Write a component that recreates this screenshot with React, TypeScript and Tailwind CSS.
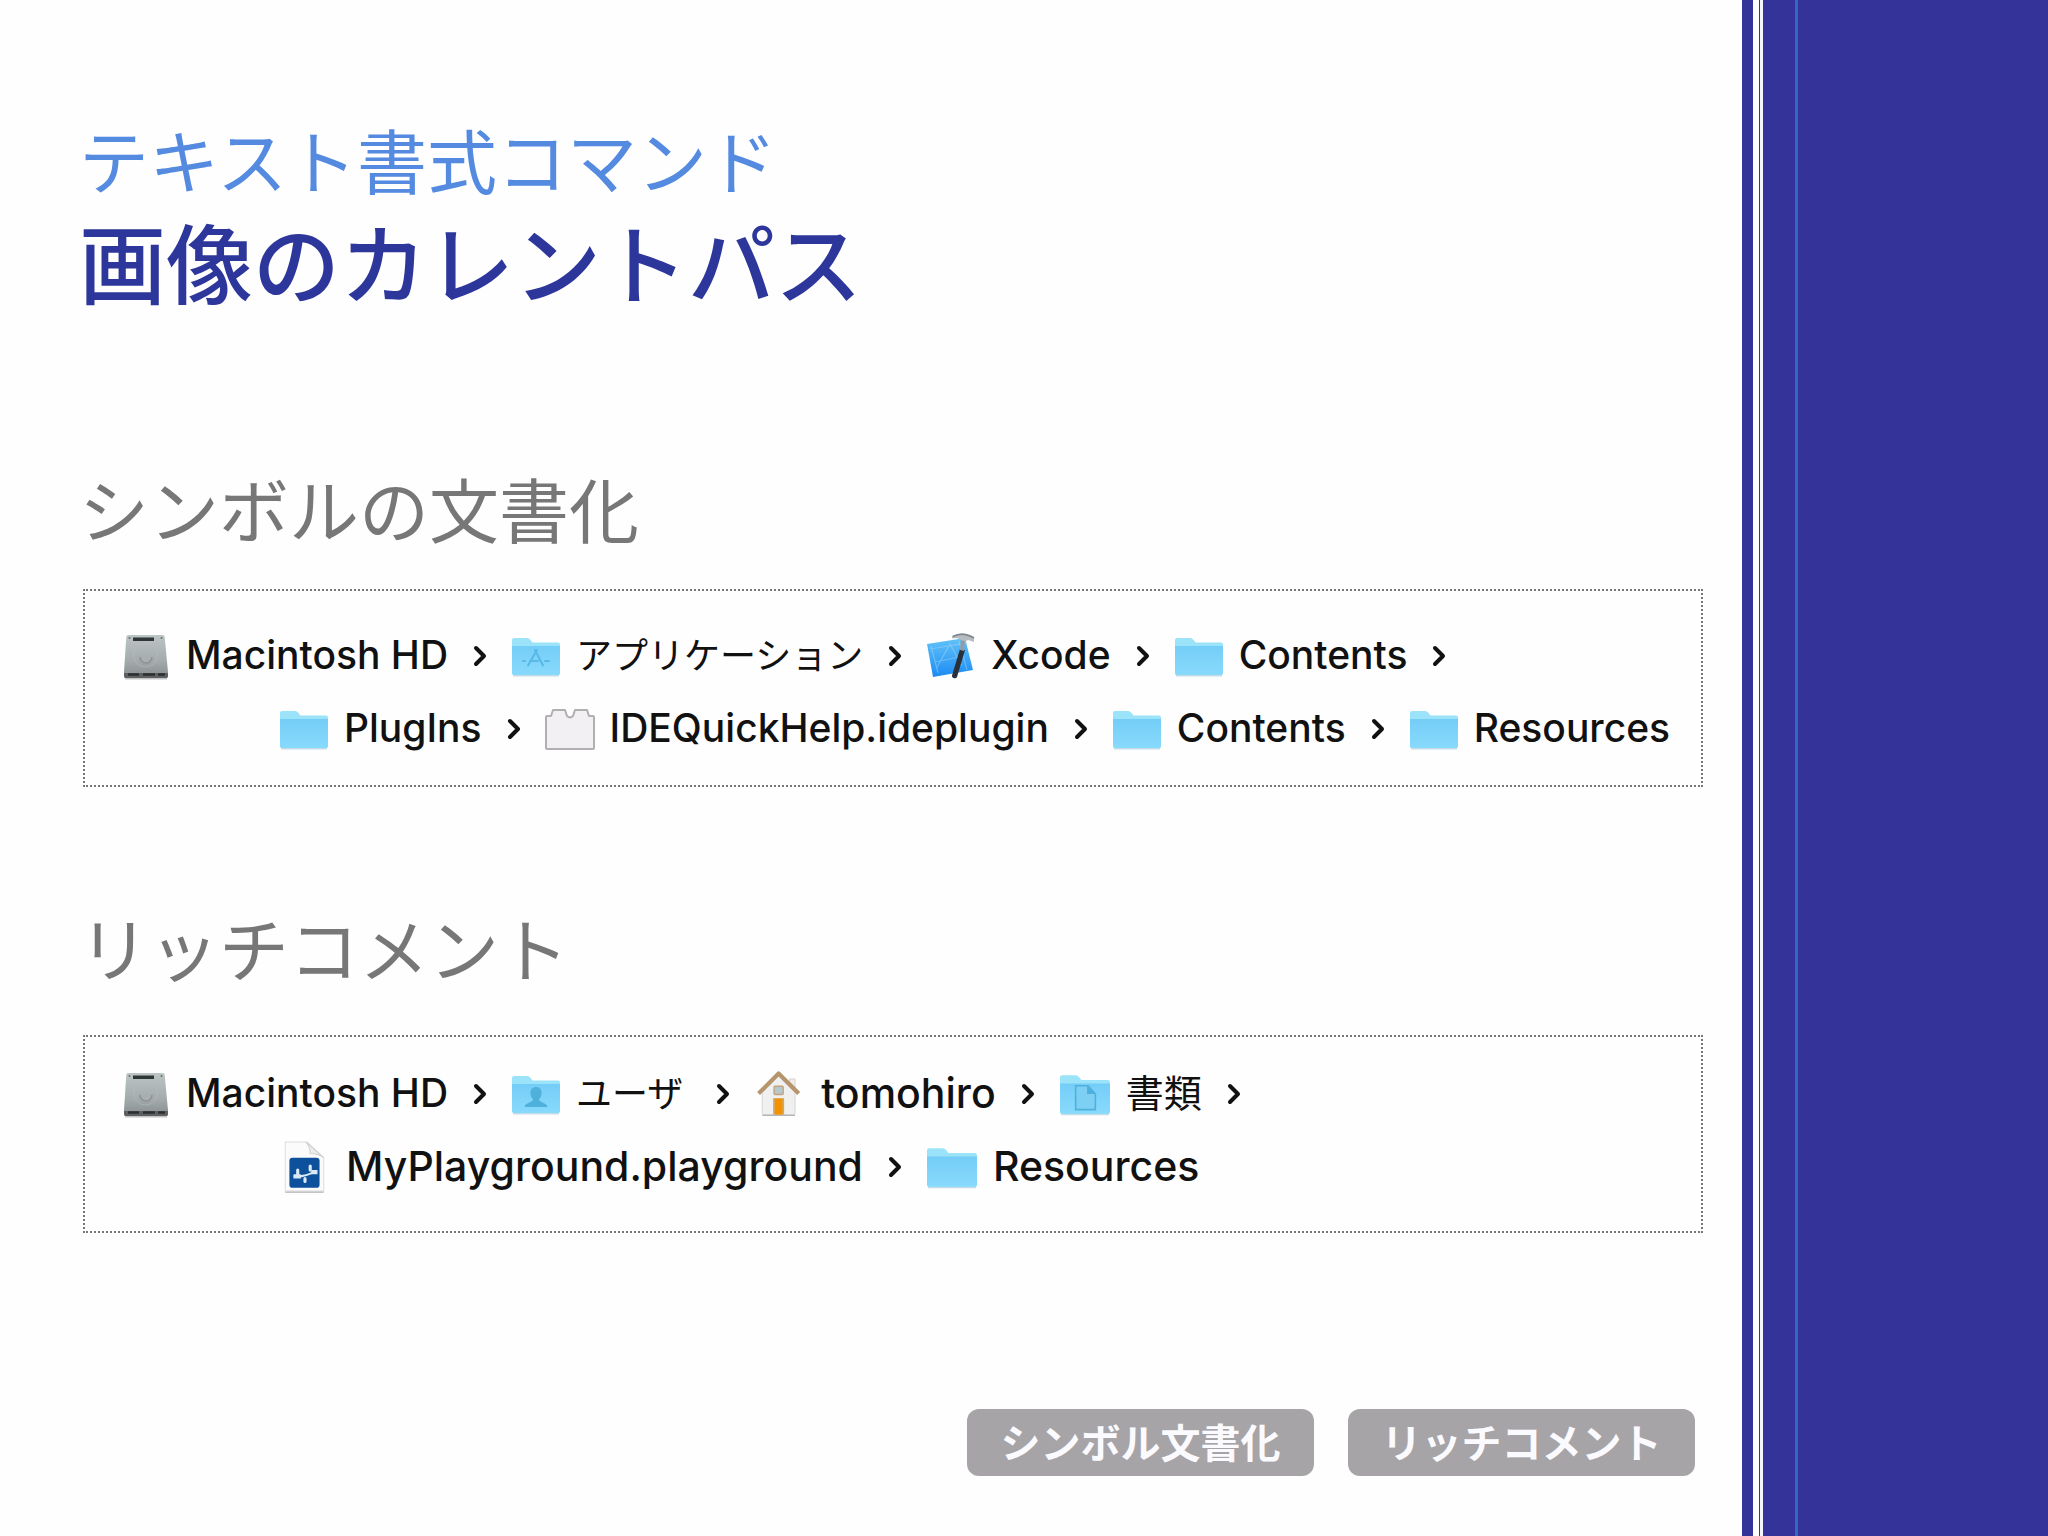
import type { ReactNode } from "react";

type IconName =
  | "disk"
  | "folder"
  | "apps"
  | "xcode"
  | "plugin"
  | "users"
  | "home"
  | "documents"
  | "playground";

interface Crumb {
  icon: IconName;
  label: string;
  large?: boolean;
  spaced?: boolean;
  last?: boolean;
}

const SYMBOL_PATH: Crumb[][] = [
  [
    { icon: "disk", label: "Macintosh HD" },
    { icon: "apps", label: "アプリケーション" },
    { icon: "xcode", label: "Xcode" },
    { icon: "folder", label: "Contents" },
  ],
  [
    { icon: "folder", label: "PlugIns" },
    { icon: "plugin", label: "IDEQuickHelp.ideplugin" },
    { icon: "folder", label: "Contents" },
    { icon: "folder", label: "Resources", last: true },
  ],
];

const COMMENT_PATH: Crumb[][] = [
  [
    { icon: "disk", label: "Macintosh HD" },
    { icon: "users", label: "ユーザ", spaced: true },
    { icon: "home", label: "tomohiro", large: true },
    { icon: "documents", label: "書類", large: true },
  ],
  [
    { icon: "playground", label: "MyPlayground.playground", large: true },
    { icon: "folder", label: "Resources", large: true, last: true },
  ],
];

// ────── ICONS ──────
function FolderIcon({ children }: { children?: ReactNode }) {
  return (
    <svg viewBox="0 0 50 50" className="h-full w-full" aria-hidden="true">
      <path d="M2 43.500h46v2H2z" fill="#c3dce6" />
      <path d="M1 9q0-2 2-2h13q2 0 3.500 2l2 2.500H47q2 0 2 2V42q0 2-2 2H3q-2 0-2-2z" fill="#9be3f8" />
      <path d="M1 15h48v27q0 2-2 2H3q-2 0-2-2z" fill="url(#folderFace)" />
      {children}
    </svg>
  );
}

function Icon({ name }: { name: IconName }) {
  switch (name) {
    case "folder":
      return <FolderIcon />;
    case "apps":
      return (
        <FolderIcon>
          <g fill="none" stroke="#57b9e4" strokeWidth="2" strokeLinecap="round">
            <path d="M24 19l8 15.500M26 19l-9 15.500M12 30h2M19 30h8M34 30h4" />
          </g>
        </FolderIcon>
      );
    case "users":
      return (
        <FolderIcon>
          <path
            d="M25 18c4 0 6 3 5.500 7-.3 3-1.500 4-2.500 5.500 0 3 8 3 8.500 7.500h-23c.5-4.500 8.500-4.500 8.500-7.500-1-1.500-2.200-2.500-2.500-5.500-.5-4 1.500-7 5.500-7z"
            fill="#4fb0dc"
          />
        </FolderIcon>
      );
    case "documents":
      return (
        <FolderIcon>
          <path d="M16 17h12l7 8v15H16z" fill="#7dcff4" stroke="#4fb0dc" strokeWidth="1.500" />
          <path d="M27 17v8h8z" fill="#4fb0dc" />
        </FolderIcon>
      );
    case "disk":
      return (
        <svg viewBox="0 0 50 50" className="h-full w-full" aria-hidden="true">
          <path d="M4 46.500h42v2H4z" fill="#c4c4c4" />
          <path d="M7.500 4h34q2 0 2.200 2L47 41v4q0 2-2 2H5q-2 0-2-2v-4L5.300 6q.2-2 2.200-2z" fill="url(#diskTop)" />
          <path d="M3 42h44v3q0 2-2 2H5q-2 0-2-2z" fill="#5d6062" />
          <path d="M7 43.500h11M22 43.500h12M37 43.500h7" stroke="#2c2e30" strokeWidth="2.500" />
          <path d="M12 6.500h21v3.500H12z" fill="#303536" />
          <circle cx="24.500" cy="24" r="12" fill="none" stroke="#b9c0c0" strokeOpacity=".5" />
          <path d="M19 26a6 6 0 0 0 12 0" fill="#a8afb0" stroke="#8b9293" strokeWidth="1.500" />
          <circle cx="8.500" cy="7" r="1" fill="#6a7070" />
          <circle cx="40.500" cy="7" r="1" fill="#6a7070" />
        </svg>
      );
    case "xcode":
      return (
        <svg viewBox="0 0 50 50" className="h-full w-full" aria-hidden="true">
          <path d="M1 13l38-6 8 32-40 7z" fill="url(#xcodeSheet)" />
          <path
            d="M10 38l14-25 12 22M9 31l29-6M4 18l37-6M12 42l-7-27M33 10l8 29"
            fill="none"
            stroke="#b4e2ff"
            strokeOpacity=".4"
            strokeWidth="1.200"
          />
          <path d="M34 18l5 1-8 27q-1 2-3.500 1-2-1-1.500-2.500z" fill="#29303a" />
          <path d="M35 7l4 1-1 12-4-1z" fill="#929ca6" />
          <path d="M26 5q9-5 18-1l4 2v5l-6-2q-2 2-7 0-4-3-9-1.500z" fill="#b7bcc2" />
          <path d="M27 5.500q9-4 17-.5l4 2" fill="none" stroke="#7c8389" strokeWidth="1.500" />
        </svg>
      );
    case "plugin":
      return (
        <svg viewBox="0 0 50 50" className="h-full w-full" aria-hidden="true">
          <path
            d="M1 13q0-1 1-1h4l2-6h12l2 6q3 3 6 0l2-6h12l2 6h4q1 0 1 1v31q0 1-1 1H2q-1 0-1-1z"
            fill="#f2f0f3"
            stroke="#b1afb2"
            strokeWidth="2"
            strokeLinejoin="round"
          />
        </svg>
      );
    case "home":
      return (
        <svg viewBox="-2 -3 57 57" className="h-full w-full" aria-hidden="true">
          <path d="M37 9h6v10h-6z" fill="#f0ede9" stroke="#d5d0ca" />
          <path d="M7 24L25 6l18 18v23q0 1-1 1H8q-1 0-1-1z" fill="#f0f0f0" stroke="#d3d3d3" />
          <path d="M7 49h36" stroke="#b5b5b5" strokeWidth="1.500" />
          <path d="M3 25L25 3l22 22" fill="none" stroke="#b6946c" strokeWidth="4.500" strokeLinejoin="round" />
          <rect x="20" y="17" width="10" height="9" rx="1" fill="#b4c8cd" stroke="#c4a27b" strokeWidth="1.500" />
          <path d="M19 30h12v18H19z" fill="#d9a552" />
          <path d="M21 31h8v17h-8z" fill="#f39200" />
        </svg>
      );
    case "playground":
      return (
        <svg viewBox="0 0 50 50" className="h-full w-full" aria-hidden="true">
          <path d="M6 49h37" stroke="#c4c4c4" strokeWidth="2" />
          <path d="M6 1h21l16 15v32H6z" fill="#fbfbfb" stroke="#dedede" />
          <path d="M26 1q4 5 4 11 8 0 13 4z" fill="#ececec" stroke="#cfcfcf" />
          <rect x="10" y="16" width="29" height="29" rx="3" fill="#0d519c" />
          <path d="M14 34q11 1 21-5" fill="none" stroke="#dceaf8" strokeWidth="2" />
          <path d="M18 28v4M30 24v4M25 36v3" stroke="#dceaf8" strokeWidth="3" strokeLinecap="round" />
          <path d="M14 34h7M31 30h6" stroke="#dceaf8" strokeWidth="4" />
        </svg>
      );
  }
}

// gradients shared by every folder, disk and sheet icon
function IconDefs() {
  return (
    <svg className="absolute h-0 w-0" aria-hidden="true">
      <defs>
        <linearGradient id="folderFace" x1="0" y1="0" x2="0" y2="1">
          <stop offset="0" stopColor="#74cdf7" />
          <stop offset="1" stopColor="#88dafc" />
        </linearGradient>
        <linearGradient id="diskTop" x1="0" y1="0" x2="0" y2="1">
          <stop offset="0" stopColor="#bcc4c4" />
          <stop offset=".6" stopColor="#a4abac" />
          <stop offset="1" stopColor="#878d8e" />
        </linearGradient>
        <linearGradient id="xcodeSheet" x1="0" y1="0" x2="0" y2="1">
          <stop offset="0" stopColor="#63c3f8" />
          <stop offset="1" stopColor="#1c8bf3" />
        </linearGradient>
      </defs>
    </svg>
  );
}

function Chevron() {
  return (
    <svg viewBox="0 0 14 22" className="mr-6 ml-[25px] h-[22px] w-[14px] shrink-0" aria-hidden="true">
      <path d="M3 3l8 8-8 8" fill="none" stroke="#111" strokeWidth="4" strokeLinecap="round" strokeLinejoin="round" />
    </svg>
  );
}

// ────── PATH BOX ──────
function CrumbItem({ icon, label, large, spaced, last }: Crumb) {
  const cjk = /[^\x00-\x7f]/.test(label);
  const size = cjk
    ? large
      ? "text-[38px] font-normal"
      : "text-[36px] font-normal"
    : large
      ? "text-[41px] font-medium"
      : "text-[39px] font-medium";
  return (
    <li className="flex items-center">
      <span className={large ? "h-[52px] w-[52px] shrink-0" : "h-[50px] w-[50px] shrink-0"}>
        <Icon name={icon} />
      </span>
      <span className={`ml-[15px] whitespace-nowrap ${spaced ? "pr-2" : ""} ${size}`}>{label}</span>
      {!last && <Chevron />}
    </li>
  );
}

function PathBox({ rows, className }: { rows: Crumb[][]; className: string }) {
  return (
    <div
      className={`ml-1 flex h-[198px] flex-col border-2 border-dotted border-[#777] pl-9 font-['Inter','Noto_Sans_CJK_JP',sans-serif] text-[#111] ${className}`}
    >
      {rows.map((row, i) => (
        <ol key={i} className={i > 0 ? "flex h-[73px] items-center pl-[158px]" : "flex h-[73px] items-center"}>
          {row.map((crumb, j) => (
            <CrumbItem key={j} {...crumb} />
          ))}
        </ol>
      ))}
    </div>
  );
}

function NavButton({ children }: { children: ReactNode }) {
  return (
    <button className="h-[67px] w-[347px] rounded-xl bg-[#a6a4a7] pb-1 text-[40px] leading-none font-bold text-[#fbfaff]">
      {children}
    </button>
  );
}

export default function App() {
  return (
    <div className="flex min-h-screen bg-[#fefefe] font-['Noto_Sans_CJK_JP',sans-serif]">
      <IconDefs />
      <main className="flex min-w-0 flex-1 flex-col pt-[115px] pr-[39px] pb-[60px] pl-[79px]">
        <header>
          <p className="text-[70px] leading-[88px] text-[#548ae0]">テキスト書式コマンド</p>
          <h1 className="text-[87px] leading-[114px] font-medium text-[#2d369b]">画像のカレントパス</h1>
        </header>

        <section className="mt-[147px]">
          <h2 className="text-[70px] leading-[88px] text-[#777]">シンボルの文書化</h2>
          <div className="mt-[37px]">
            <PathBox rows={SYMBOL_PATH} className="pt-7" />
          </div>
        </section>

        <section className="mt-[116px]">
          <h2 className="text-[70px] leading-[88px] text-[#777]">リッチコメント</h2>
          <div className="mt-[44px]">
            <PathBox rows={COMMENT_PATH} className="pt-5" />
          </div>
        </section>

        <nav className="mt-auto flex justify-end gap-[34px] pr-2">
          <NavButton>シンボル文書化</NavButton>
          <NavButton>リッチコメント</NavButton>
        </nav>
      </main>

      {/* Side band with its pinstripes */}
      <aside className="flex w-[306px] shrink-0 bg-[#333399]">
        <div className="ml-[11px] w-[6px] bg-white" />
        <div className="ml-px w-[3px] bg-[#f4f2fb]" />
        <div className="ml-[32px] w-[3px] bg-[#2f69c6]" />
      </aside>
    </div>
  );
}
